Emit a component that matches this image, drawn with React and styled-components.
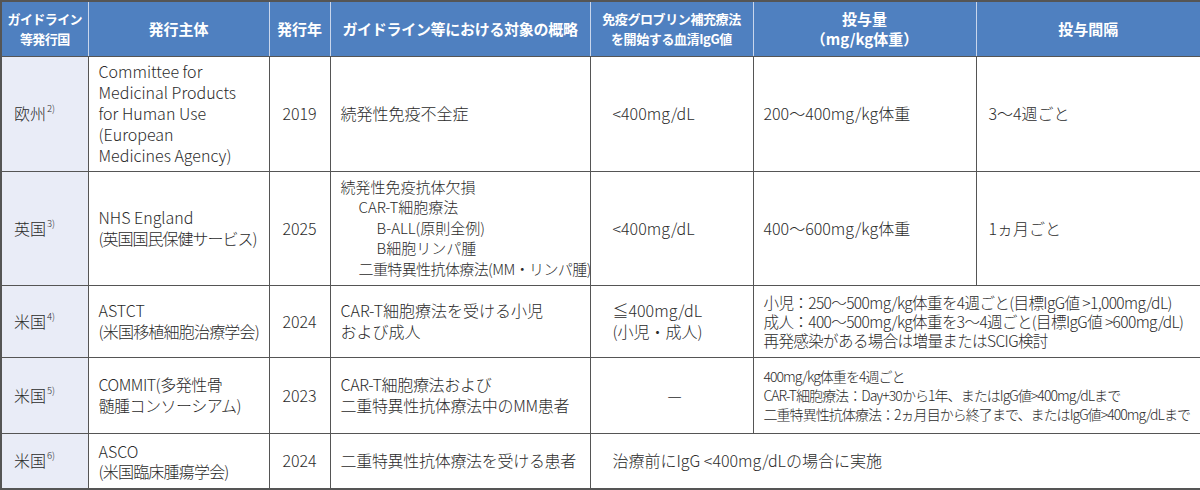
import React from 'react'
import styled, { createGlobalStyle } from 'styled-components';

const GlobalStyle = createGlobalStyle`
	html, body {
		margin: 0;
		padding: 0;
		background: #ffffff;
	}
	body {
		font-family: 'Noto Sans CJK JP', 'Noto Sans', sans-serif;
		color: #2b2b2b;
	}
`;

const Table = styled.table`
	width: 1200px;
	height: 490px;
	table-layout: fixed;
	border-collapse: collapse;
	border: 2px solid #555555;
`;

const HeadCell = styled.th`
	background: #4f80c0;
	color: #ffffff;
	font-weight: 700;
	font-size: ${p => p.$size || 15}px;
	line-height: ${p => p.$lh || 19}px;
	letter-spacing: ${p => p.$ls || 0}px;
	text-align: center;
	vertical-align: middle;
	padding: 0 2px;
	white-space: nowrap;
	border-left: 1px solid #c9d6ec;
	border-right: 1px solid #c9d6ec;
	border-bottom: 1px solid #555555;
	&:first-child { border-left: 2px solid #555555; }
	&:last-child { border-right: 2px solid #555555; }
`;

const Cell = styled.td`
	border: 1px solid #555555;
	vertical-align: middle;
	font-weight: 300;
	font-size: ${p => p.$size || 16}px;
	line-height: ${p => p.$lh || 21}px;
	letter-spacing: ${p => p.$ls || 0}px;
	text-align: ${p => p.$align || 'left'};
	padding: 0 ${p => p.$pr || 4}px 0 ${p => p.$pl || 10}px;
	white-space: nowrap;
	overflow: hidden;
`;

const CountryCell = styled(Cell)`
	background: #e9ecf7;
	padding-left: 12px;
`;

const Sup = styled.sup`
	font-size: 9.5px;
	line-height: 0;
	vertical-align: 8px;
	margin-left: 1px;
`;

const Indent = styled.div`
	padding-left: ${p => p.$level * 18}px;
`;

const Tight = styled.span`
	letter-spacing: ${p => p.$ls}px;
`;

const rows = [55, 115, 114, 72, 76, 56];

const Row = styled.tr`
	height: ${p => p.$h}px;
`;

export default function App(){
	return <>
		<GlobalStyle />
		<Table>
			<colgroup>
				<col style={{width: 87}} />
				<col style={{width: 181}} />
				<col style={{width: 61}} />
				<col style={{width: 260}} />
				<col style={{width: 163}} />
				<col style={{width: 223}} />
				<col style={{width: 225}} />
			</colgroup>
			<thead>
				<Row $h={rows[0]}>
					<HeadCell $size={13} $lh={20} $ls={-0.6}>ガイドライン<br />等発行国</HeadCell>
					<HeadCell>発行主体</HeadCell>
					<HeadCell>発行年</HeadCell>
					<HeadCell $ls={-0.3}>ガイドライン等における対象の概略</HeadCell>
					<HeadCell $size={13} $lh={20} $ls={-0.4}>免疫グロブリン補充療法<br />を開始する血清IgG値</HeadCell>
					<HeadCell $size={15} $lh={20}>投与量<br />（mg/kg体重）</HeadCell>
					<HeadCell>投与間隔</HeadCell>
				</Row>
			</thead>
			<tbody>
				<Row $h={rows[1]}>
					<CountryCell>欧州<Sup>2)</Sup></CountryCell>
					<Cell>Committee for<br />Medicinal Products<br />for Human Use<br />(European<br />Medicines Agency)</Cell>
					<Cell $align='center' $pl={4} $pr={4}>2019</Cell>
					<Cell>続発性免疫不全症</Cell>
					<Cell $pl={22}>&lt;400mg/dL</Cell>
					<Cell>200〜400mg/kg体重</Cell>
					<Cell $pl={12}>3〜4週ごと</Cell>
				</Row>
				<Row $h={rows[2]}>
					<CountryCell>英国<Sup>3)</Sup></CountryCell>
					<Cell>NHS England<br /><Tight $ls={-1}>(英国国民保健サービス)</Tight></Cell>
					<Cell $align='center' $pl={4} $pr={4}>2025</Cell>
					<Cell $size={15} $lh={20.5}>
						<Indent $level={0}>続発性免疫抗体欠損</Indent>
						<Indent $level={1}>CAR-T細胞療法</Indent>
						<Indent $level={2}>B-ALL(原則全例)</Indent>
						<Indent $level={2}>B細胞リンパ腫</Indent>
						<Indent $level={1}><Tight $ls={-0.6}>二重特異性抗体療法(MM・リンパ腫)</Tight></Indent>
					</Cell>
					<Cell $pl={22}>&lt;400mg/dL</Cell>
					<Cell>400〜600mg/kg体重</Cell>
					<Cell $pl={12}>1ヵ月ごと</Cell>
				</Row>
				<Row $h={rows[3]}>
					<CountryCell>米国<Sup>4)</Sup></CountryCell>
					<Cell>ASTCT<br /><Tight $ls={-0.8}>(米国移植細胞治療学会)</Tight></Cell>
					<Cell $align='center' $pl={4} $pr={4}>2024</Cell>
					<Cell>CAR-T細胞療法を受ける小児<br />および成人</Cell>
					<Cell $pl={22}>≦400mg/dL<br />(小児・成人)</Cell>
					<Cell colSpan={2} $size={15.5} $lh={19} $ls={-0.6}>
						小児：250〜500mg/kg体重を4週ごと(目標IgG値 &gt;1,000mg/dL)<br />
						成人：400〜500mg/kg体重を3〜4週ごと(目標IgG値 &gt;600mg/dL)<br />
						再発感染がある場合は増量またはSCIG検討
					</Cell>
				</Row>
				<Row $h={rows[4]}>
					<CountryCell>米国<Sup>5)</Sup></CountryCell>
					<Cell $ls={-0.5}>COMMIT(多発性骨<br />髄腫コンソーシアム)</Cell>
					<Cell $align='center' $pl={4} $pr={4}>2023</Cell>
					<Cell $ls={-0.3}>CAR-T細胞療法および<br />二重特異性抗体療法中のMM患者</Cell>
					<Cell $align='center'>—</Cell>
					<Cell colSpan={2} $size={14} $lh={19} $ls={-0.95}>
						400mg/kg体重を4週ごと<br />
						CAR-T細胞療法：Day+30から1年、またはIgG値&gt;400mg/dLまで<br />
						二重特異性抗体療法：2ヵ月目から終了まで、またはIgG値&gt;400mg/dLまで
					</Cell>
				</Row>
				<Row $h={rows[5]}>
					<CountryCell>米国<Sup>6)</Sup></CountryCell>
					<Cell $lh={20}>ASCO<br /><Tight $ls={-0.8}>(米国臨床腫瘍学会)</Tight></Cell>
					<Cell $align='center' $pl={4} $pr={4}>2024</Cell>
					<Cell $ls={-0.3}>二重特異性抗体療法を受ける患者</Cell>
					<Cell colSpan={3} $pl={22}>治療前にIgG &lt;400mg/dLの場合に実施</Cell>
				</Row>
			</tbody>
		</Table>
	</>
}
